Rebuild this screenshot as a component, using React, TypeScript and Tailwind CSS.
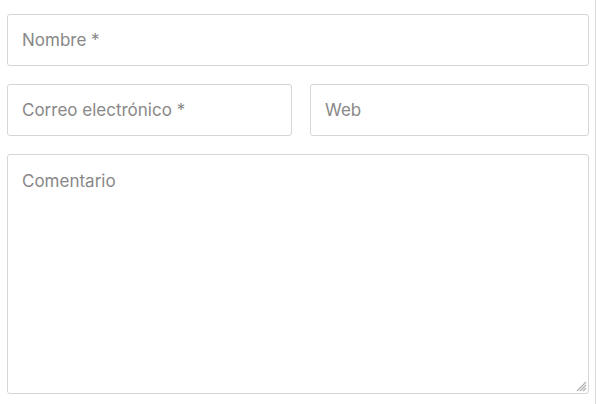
export default function App() {
  const field =
    'h-[52px] rounded-[3px] border border-[#d6d6d6] px-[14px] text-[17px] text-[#555] outline-none placeholder:text-[#888]';
  return (
    <div className="flex h-[404px] w-[597px] bg-white" style={{ fontFamily: 'Inter, "Liberation Sans", sans-serif' }}>
      <form className="flex w-[595px] flex-col gap-[18px] pl-[7px] pr-[6px] pt-[14px]">
        <input type="text" placeholder="Nombre *" className={`w-full ${field}`} />
        <div className="flex gap-[18px]">
          <input type="email" placeholder="Correo electrónico *" className={`w-[285px] ${field}`} />
          <input type="url" placeholder="Web" className={`min-w-0 flex-1 ${field}`} />
        </div>
        <div className="relative">
          <textarea
            placeholder="Comentario"
            className="block h-[240px] w-full resize-none rounded-[3px] border border-[#d6d6d6] px-[14px] py-[14px] text-[17px] text-[#555] outline-none placeholder:text-[#888]"
          />
          <svg className="pointer-events-none absolute bottom-[2px] right-[2px]" width="12" height="12" viewBox="0 0 12 12">
            <path d="M11 2 L2 11 M11 5 L5 11 M11 8 L8 11" stroke="#b0b0b0" strokeWidth="1.2" />
          </svg>
        </div>
      </form>
      <div className="w-px bg-[#d8dbe0]" />
    </div>
  );
}
